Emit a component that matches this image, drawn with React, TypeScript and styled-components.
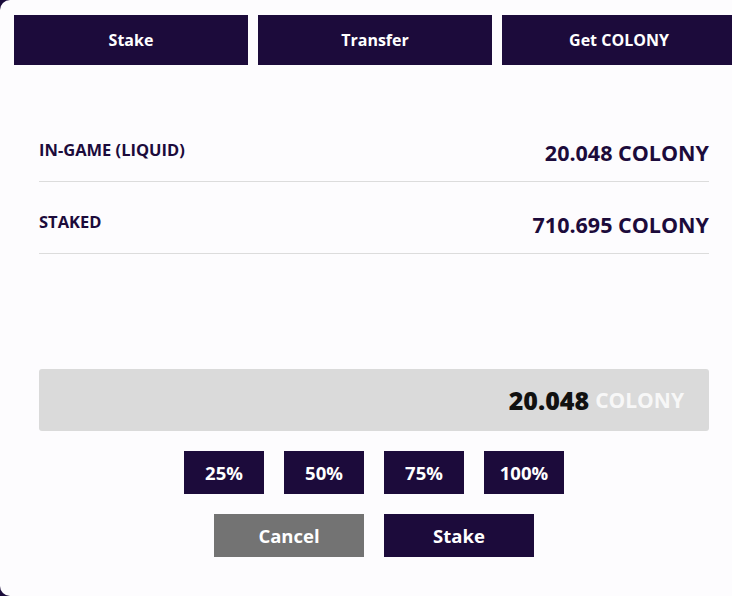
import React, { useState } from "react";
import styled, { createGlobalStyle } from "styled-components";

const GlobalStyle = createGlobalStyle`
  html, body {
    margin: 0;
    padding: 0;
    background: #1b0c3b;
    overflow: hidden;
  }
  body {
    font-family: "Open Sans", "Liberation Sans", sans-serif;
  }
`;

const NAVY = "#1c0b3b";

const Modal = styled.div`
  width: 749px;
  height: 596px;
  box-sizing: border-box;
  background: #fdfcfe;
  border-radius: 10px;
  padding: 15px 14px 0;
`;

const Tabs = styled.div`
  display: grid;
  grid-template-columns: repeat(3, 234px);
  gap: 10px;
`;

const Tab = styled.button`
  height: 50px;
  border: none;
  background: ${NAVY};
  color: #fff;
  font-family: inherit;
  font-weight: 700;
  font-size: 16px;
  cursor: pointer;
`;

const Content = styled.div`
  width: 670px;
  margin: 45px 0 0 25px;
`;

const Row = styled.div`
  display: flex;
  justify-content: space-between;
  align-items: center;
  height: 72px;
  box-sizing: border-box;
  border-bottom: 1px solid #dcdcdc;
`;

const Label = styled.span`
  color: ${NAVY};
  font-weight: 700;
  font-size: 16.5px;
  margin-top: 8px;
`;

const Value = styled.span`
  color: ${NAVY};
  font-weight: 700;
  font-size: 21.5px;
  margin-top: 14px;
`;

const AmountBox = styled.div`
  margin-top: 115px;
  height: 62px;
  background: #dadada;
  border-radius: 3px;
  display: flex;
  align-items: center;
  justify-content: flex-end;
  padding-right: 25px;
  gap: 6px;
`;

const AmountNumber = styled.span`
  color: #111;
  font-weight: 800;
  font-size: 25px;
`;

const AmountUnit = styled.span`
  color: #f7f7f7;
  font-weight: 700;
  font-size: 21px;
`;

const ButtonRow = styled.div`
  display: flex;
  justify-content: center;
  gap: 20px;
  margin-top: 20px;
`;

const Button = styled.button<{ $w: number; $muted?: boolean }>`
  width: ${(p) => p.$w}px;
  height: 43px;
  border: none;
  background: ${(p) => (p.$muted ? "#737373" : NAVY)};
  color: #fff;
  font-family: inherit;
  font-weight: 700;
  font-size: 18.5px;
  cursor: pointer;
`;

export default function App() {
  const [amount] = useState("20.048");
  return (
    <>
      <GlobalStyle />
      <Modal>
        <Tabs>
          <Tab>Stake</Tab>
          <Tab>Transfer</Tab>
          <Tab>Get COLONY</Tab>
        </Tabs>
        <Content>
          <Row>
            <Label>IN-GAME (LIQUID)</Label>
            <Value>20.048 COLONY</Value>
          </Row>
          <Row>
            <Label>STAKED</Label>
            <Value>710.695 COLONY</Value>
          </Row>
          <AmountBox>
            <AmountNumber>{amount}</AmountNumber>
            <AmountUnit>COLONY</AmountUnit>
          </AmountBox>
          <ButtonRow>
            {["25%", "50%", "75%", "100%"].map((p) => (
              <Button key={p} $w={80}>
                {p}
              </Button>
            ))}
          </ButtonRow>
          <ButtonRow>
            <Button $w={150} $muted>
              Cancel
            </Button>
            <Button $w={150}>Stake</Button>
          </ButtonRow>
        </Content>
      </Modal>
    </>
  );
}
